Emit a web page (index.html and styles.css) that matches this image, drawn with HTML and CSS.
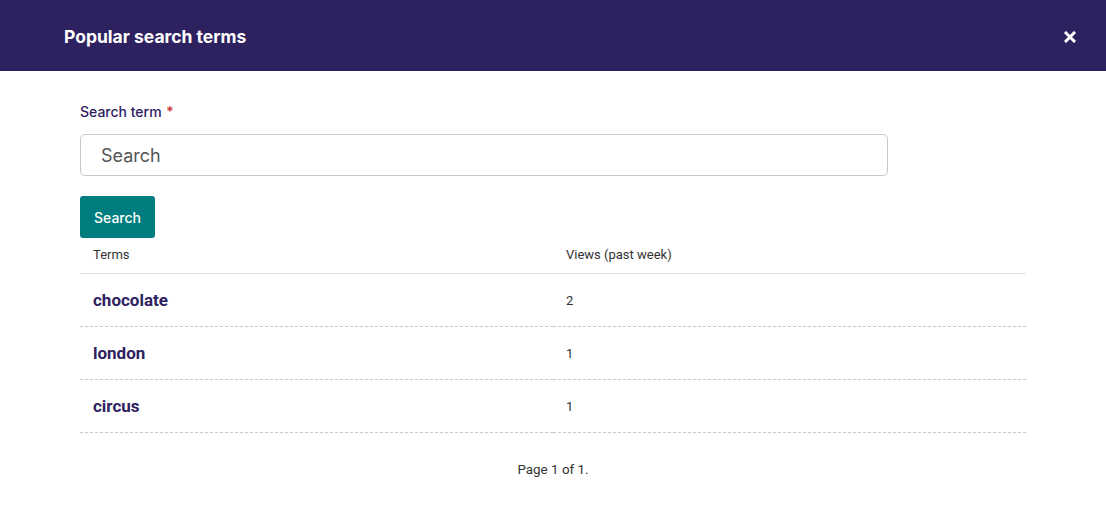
FILE: index.html
```html
<!DOCTYPE html>
<html>
<head>
<meta charset="utf-8">
<link rel="stylesheet" href="styles.css">
</head>
<body>
<div class="modal">
  <header class="modal-header">
    <h1 class="modal-title">Popular search terms</h1>
    <button class="close" aria-label="Close">
      <svg width="12" height="12" viewBox="0 0 12 12"><path d="M2 2 L10 10 M10 2 L2 10" stroke="#fff" stroke-width="3" stroke-linecap="square"/></svg>
    </button>
  </header>
  <div class="modal-body">
    <form class="search-form">
      <label class="field-label">Search term <span class="req">*</span></label>
      <input class="search-input" type="text" placeholder="Search">
      <button class="btn" type="button">Search</button>
    </form>
    <table class="listing">
      <thead>
        <tr><th>Terms</th><th>Views (past week)</th></tr>
      </thead>
      <tbody>
        <tr><td class="term">chocolate</td><td>2</td></tr>
        <tr><td class="term">london</td><td>1</td></tr>
        <tr><td class="term">circus</td><td>1</td></tr>
      </tbody>
    </table>
    <p class="pagination">Page 1 of 1.</p>
  </div>
</div>
</body>
</html>
```
FILE: styles.css
```css
html, body { margin: 0; padding: 0; background: #fff; }
body { font-family: Inter, "Noto Sans", sans-serif; }
.modal { width: 1106px; min-height: 524px; background: #fff; }
.modal-header {
  height: 71px;
  background: #2e2160;
  display: flex;
  align-items: center;
  justify-content: space-between;
  padding: 2px 30px 0 64px;
  box-sizing: border-box;
}
.modal-title { margin: 0; color: #fff; font-size: 17.5px; font-weight: 700; letter-spacing: 0; }
.close { background: none; border: 0; padding: 0; width: 12px; height: 12px; display: flex; cursor: pointer; }
.modal-body { padding: 32px 80px 0 80px; }
.search-form { display: flex; flex-direction: column; align-items: flex-start; }
.field-label { font-size: 14px; color: #2e2160; font-weight: 500; line-height: 18px; }
.req { color: #cd3238; margin-left: 1px; }
.search-input {
  margin-top: 13px;
  width: 808px; height: 42px; box-sizing: border-box;
  border: 1px solid #c8c8c8; border-radius: 5px;
  padding: 0 20px;
  font-family: Inter, "Noto Sans", sans-serif; font-size: 18px; color: #333;
  outline: none;
}
.search-input::placeholder { color: #555; }
.btn {
  margin-top: 20px;
  height: 42px; padding: 0 14px;
  background: #007d7e; color: #fff; border: 0; border-radius: 3px;
  font-family: Inter, "Noto Sans", sans-serif; font-size: 14px; font-weight: 500;
}
.listing { width: 946px; border-collapse: collapse; font-family: Roboto, sans-serif; }
.listing th {
  width: 50%; text-align: left; font-weight: 400; font-size: 13px; color: #333;
  padding: 9px 13px 11px; border-bottom: 1px solid #e0e0e0;
}
.listing td {
  height: 52px; padding: 0 13px; font-size: 13px; color: #333;
  border-bottom: 1px dashed #c8c8c8; vertical-align: middle;
}
.listing td.term { font-size: 17px; font-weight: 700; color: #2e2160; }
.pagination { margin: 29px 0 0; text-align: center; font-family: Roboto, sans-serif; font-size: 13.4px; color: #333; }
```
